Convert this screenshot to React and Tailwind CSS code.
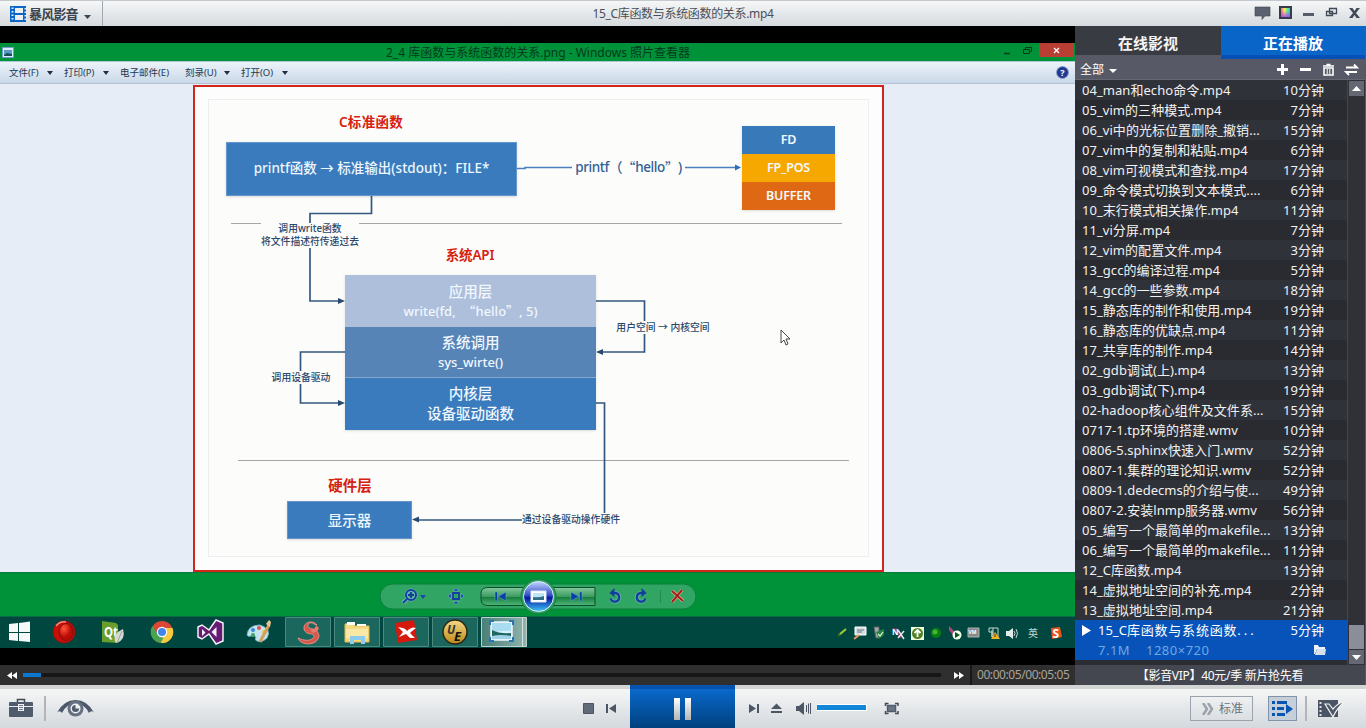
import React from 'react';

const episodes = [
  ['04_man和echo命令.mp4', '10分钟'],
  ['05_vim的三种模式.mp4', '7分钟'],
  ['06_vi中的光标位置删除_撤销...', '15分钟'],
  ['07_vim中的复制和粘贴.mp4', '6分钟'],
  ['08_vim可视模式和查找.mp4', '17分钟'],
  ['09_命令模式切换到文本模式....', '6分钟'],
  ['10_末行模式相关操作.mp4', '11分钟'],
  ['11_vi分屏.mp4', '7分钟'],
  ['12_vim的配置文件.mp4', '3分钟'],
  ['13_gcc的编译过程.mp4', '5分钟'],
  ['14_gcc的一些参数.mp4', '18分钟'],
  ['15_静态库的制作和使用.mp4', '19分钟'],
  ['16_静态库的优缺点.mp4', '11分钟'],
  ['17_共享库的制作.mp4', '14分钟'],
  ['02_gdb调试(上).mp4', '13分钟'],
  ['03_gdb调试(下).mp4', '19分钟'],
  ['02-hadoop核心组件及文件系...', '15分钟'],
  ['0717-1.tp环境的搭建.wmv', '10分钟'],
  ['0806-5.sphinx快速入门.wmv', '52分钟'],
  ['0807-1.集群的理论知识.wmv', '52分钟'],
  ['0809-1.dedecms的介绍与使...', '49分钟'],
  ['0807-2.安装lnmp服务器.wmv', '56分钟'],
  ['05_编写一个最简单的makefile...', '13分钟'],
  ['06_编写一个最简单的makefile...', '11分钟'],
  ['12_C库函数.mp4', '13分钟'],
  ['14_虚拟地址空间的补充.mp4', '2分钟'],
  ['13_虚拟地址空间.mp4', '21分钟'],
];

function TopBar() {
  return (
    <header className="flex h-[26px] items-stretch border-t border-[#c3c9ce] bg-linear-to-b from-[#f6f7f7] to-[#d5dade]">
      <div className="flex w-[103px] items-center border-r border-[#a2a8b0] pl-[10px] pt-px">
        <svg className="h-4 w-4 shrink-0" viewBox="0 0 16 16">
          <path d="M0 0h16v16H0z" fill="#0b66c8" />
          <path d="M5 2h8v5H5zM5 9h8v5H5z" fill="#eceef0" />
          <path d="M1.500 1.500h2v1.500h-2zM1.500 5h2v1.500h-2zM1.500 8.500h2V10h-2zM1.500 12h2v1.500h-2zM14.500 2H16v1.500h-1.500zM14.500 5.500H16V7h-1.500zM14.500 9H16v1.500h-1.500zM14.500 12.500H16V14h-1.500z" fill="#eceef0" />
        </svg>
        <span className="ml-[3px] w-[50px] whitespace-nowrap text-[13px] font-bold leading-none tracking-[-0.800px] text-[#3d434d]">暴风影音</span>
        <svg className="ml-[5px] mt-[6px] h-1 w-[7px]" viewBox="0 0 7 4"><path d="M0 0h7L3.500 4z" fill="#3b4450" /></svg>
      </div>
      <div className="flex flex-1 items-center justify-center">
        <span className="whitespace-nowrap pl-[9px] text-[12px] leading-none tracking-[-0.320px] text-[#4a4f57]">15_C库函数与系统函数的关系.mp4</span>
      </div>
      <div className="flex w-[112px] items-start pt-[5px]">
        <svg className="h-[18px] w-[112px]" viewBox="1254 6 112 18">
          <path d="M1255 7h15v9h-5l-3 3.500v-3.500h-7z" fill="#5a6270" stroke="#3f4651" strokeWidth=".6" />
          <defs>
            <linearGradient id="hue"><stop stopColor="#ff5f9a" /><stop offset=".4" stopColor="#fff04a" /><stop offset=".7" stopColor="#52f0a0" /><stop offset="1" stopColor="#30c8d8" /></linearGradient>
            <linearGradient id="hue2" x1="0" y1="0" x2="0" y2="1"><stop offset=".3" stopColor="#a4f" stopOpacity="0" /><stop offset="1" stopColor="#a4f" stopOpacity=".9" /></linearGradient>
          </defs>
          <path d="M1279 6h13v13h-13z" fill="#353c47" />
          <path d="M1281 8h9v9h-9z" fill="url(#hue)" /><path d="M1281 8h9v9h-9z" fill="url(#hue2)" />
          <path d="M1303 13h11v3h-11z" fill="#555d69" />
          <path d="M1329.500 8.500h7v5h-7zM1326.500 11.500h6v4h-6z" fill="#e6e9eb" stroke="#414a56" strokeWidth="1.300" />
          <path d="M1349 8h3.500l2 3 2-3h3.500l-4 5 4 5h-3.500l-2-3-2 3h-3.500l4-5z" fill="#414a56" />
        </svg>
      </div>
    </header>
  );
}

function Caret() {
  return <svg className="h-1 w-[6px]" viewBox="0 0 6 4"><path d="M0 0h6L3 4z" fill="#222e40" /></svg>;
}

function ViewerChrome() {
  return (
    <>
      <div className="flex h-[18px] items-center bg-[#009239]">
        <svg className="ml-[2px] h-[11px] w-[12px]" viewBox="0 0 12 11">
          <path d="M.5.500h11v10H.5z" fill="#dcecff" stroke="#7299d0" /><path d="M2 3h8v5H2z" fill="#5a9bc4" /><path d="M2 8l3-2 5 1v2H2z" fill="#174d54" />
        </svg>
        <span className="ml-[372px] whitespace-nowrap pt-[2px] text-[12px] leading-none text-[#033b1c]">2_4 库函数与系统函数的关系.png - Windows 照片查看器</span>
        <svg className="ml-auto h-[18px] w-[85px]" viewBox="990 43 85 18">
          <path d="M1004 53.500h6" stroke="#033b1c" strokeWidth="1.500" />
          <path d="M1023.500 49.500h6v4h-6zM1025.500 49.500v-2h6v4h-2" fill="none" stroke="#033b1c" />
          <path d="M1039 43h35v14h-35z" fill="#b93f35" />
          <path d="M1054 48l5 5m0-5l-5 5" stroke="#fff" strokeWidth="1.300" />
        </svg>
      </div>
      <div className="flex h-[23px] items-center whitespace-nowrap border-b border-[#b5c2d5] border-t border-t-[#a8c8d4] bg-linear-to-b from-[#ecf3fa] to-[#c9d9e8] pl-[9px] text-[9.500px] leading-none text-[#243750]">
        <span className="w-[38px]">文件(F)</span><Caret />
        <span className="ml-[11px] w-[39px]">打印(P)</span><Caret />
        <span className="ml-[11px] w-[65px]">电子邮件(E)</span>
        <span className="w-[39px]">刻录(U)</span><Caret />
        <span className="ml-[11px] w-[41px]">打开(O)</span><Caret />
        <svg className="ml-auto mr-[6px] h-[13px] w-[13px]" viewBox="0 0 13 13">
          <circle cx="6.500" cy="6.500" r="6" fill="#213a91" stroke="#8fa1cc" />
          <text x="6.500" y="10" fontSize="9" fontWeight="bold" fill="#fff" textAnchor="middle">?</text>
        </svg>
      </div>
    </>
  );
}

function Quoted({ children }) {
  return (
    <>
      <span className="font-['Noto_Sans_CJK_SC',sans-serif]">“</span>{children}<span className="font-['Noto_Sans_CJK_SC',sans-serif]">”</span>
    </>
  );
}

function Diagram() {
  return (
    <div className="relative h-[488px] overflow-hidden bg-[#e6edf6] font-medium">
      <div className="absolute left-[193px] top-px h-[487px] w-[691px] border-2 border-[#d0261b] bg-[#fdfdfd]" />
      <div className="absolute left-[208px] top-[15px] h-[458px] w-[661px] border border-[#eeeeee] bg-[#fcfcfb]" />
      <svg className="absolute inset-0 h-[488px] w-[1075px]" viewBox="0 84 1075 488" fill="none">
        <path d="M231 223.500h611M238 460.500h611" stroke="#a5a6a8" />
        <path d="M517 168.500h8v-1h210" stroke="#4a80bd" strokeWidth="1.600" />
        <path d="M741 167.500l-6-3v6z" fill="#2d6eb8" />
        <g stroke="#33587f" strokeWidth="1.700">
          <path d="M371.500 195v18.500h-61.500v87.500h29" />
          <path d="M595 301h49.500v51H602" />
          <path d="M346 352h-45.500v51h38" />
          <path d="M595 403h9.500v117H418" />
        </g>
        <path d="M345 301l-7-3v6zM596 352l7-3v6zM345 403l-7-3v6zM412 519.500l7-3v6z" fill="#27496f" />
      </svg>
      <div className="absolute left-[321px] top-[30px] w-[100px] text-center text-[13.500px] font-semibold leading-[17px] tracking-[0.300px] text-[#d6210f]">C标准函数</div>
      <div className="absolute left-[226px] top-[58px] flex h-[54px] w-[291px] items-center justify-center whitespace-nowrap border border-[#6397cd] bg-[#397bbc] text-[13.500px] leading-none text-[#eef6ff] shadow-sm">printf函数 → 标准输出(stdout)：FILE*</div>
      <div className="absolute left-[572px] top-[75px] flex h-[18px] w-[113px] items-center justify-center whitespace-nowrap bg-[#fcfcfb] text-[13.500px] leading-none tracking-[-0.400px] text-[#315f95]">printf（<Quoted>hello</Quoted>)</div>
      <div className="absolute left-[742px] top-[42px] h-[84px] w-[93px] text-center text-[12.500px] font-semibold leading-[28px] tracking-[-0.200px] text-[#f3f8ff] shadow-sm">
        <div className="h-[28px] bg-[#3879ba]">FD</div>
        <div className="h-[28px] bg-[#f6a800]">FP_POS</div>
        <div className="h-[28px] bg-[#de6813]">BUFFER</div>
      </div>
      <div className="absolute left-[261px] top-[139px] w-[98px] whitespace-nowrap bg-[#fcfcfb] text-center text-[9.800px] leading-[12.500px] text-[#29486c]">调用write函数<br />将文件描述符传递过去</div>
      <div className="absolute left-[420px] top-[162px] w-[100px] text-center text-[13.500px] font-semibold leading-[18px] tracking-[-0.200px] text-[#d6210f]">系统API</div>
      <div className="absolute left-[345px] top-[191px] w-[251px] text-center text-[14.500px] leading-[20px] text-[#f1f7ff] shadow-sm">
        <div className="h-[52px] bg-[#adbfdb] pt-[6px]">应用层<div className="h-[20px] whitespace-nowrap text-[13px]">write(fd,&nbsp; <Quoted>hello</Quoted>, 5)</div></div>
        <div className="h-[51px] border-b border-[#86a8cd] bg-[#5784b6] pt-[5px]">系统调用<div className="text-[13px]">sys_wirte()</div></div>
        <div className="h-[52px] bg-[#397bbc] pt-[5px]">内核层<div>设备驱动函数</div></div>
      </div>
      <div className="absolute left-[616px] top-[237px] w-[94px] whitespace-nowrap bg-[#fcfcfb] text-center text-[9.800px] leading-[13px] text-[#29486c]">用户空间 → 内核空间</div>
      <div className="absolute left-[271px] top-[287px] w-[60px] whitespace-nowrap bg-[#fcfcfb] text-center text-[9.800px] leading-[13px] text-[#29486c]">调用设备驱动</div>
      <div className="absolute left-[300px] top-[392px] w-[100px] text-center text-[14.500px] font-semibold leading-[18px] text-[#d6210f]">硬件层</div>
      <div className="absolute left-[287px] top-[417px] flex h-[38px] w-[125px] items-center justify-center border border-[#6397cd] bg-[#397bbc] text-[14.500px] leading-none text-[#eef6ff] shadow-sm">显示器</div>
      <div className="absolute left-[522px] top-[429px] w-[98px] whitespace-nowrap bg-[#fcfcfb] text-center text-[9.800px] leading-[13px] text-[#29486c]">通过设备驱动操作硬件</div>
      <svg className="absolute left-[780px] top-[245px] h-[17px] w-[11px]" viewBox="0 0 11 17"><path d="M1 1v13l3-3 2 5 2-1-2-5h4z" fill="#fff" stroke="#333" strokeWidth=".9" /></svg>
    </div>
  );
}

function ViewerControls() {
  return (
    <div className="h-[44px] bg-[#009239]">
      <svg className="h-[44px] w-[1075px]" viewBox="0 572 1075 44">
        <defs>
          <linearGradient id="glass" x1="0" y1="0" x2="0" y2="1"><stop stopColor="#83c99c" /><stop offset=".5" stopColor="#3e9c61" /><stop offset=".52" stopColor="#147b3d" /><stop offset="1" stopColor="#4fb778" /></linearGradient>
          <linearGradient id="orb" x1="0" y1="0" x2="0" y2="1"><stop stopColor="#c2d3ff" /><stop offset=".45" stopColor="#3552c7" /><stop offset=".55" stopColor="#0517a0" /><stop offset="1" stopColor="#3fc8f3" /></linearGradient>
        </defs>
        <path d="M0 572.500h1075" stroke="#087a37" />
        <rect x="380" y="584" width="316" height="25" rx="12.500" fill="#31a563" stroke="#087f3a" />
        <path d="M488 587.500h107v18H488q-7 0-7-6v-6q0-6 7-6z" fill="url(#glass)" stroke="#0c4f2b" />
        <circle cx="538.500" cy="596.500" r="17.500" fill="#2fa260" stroke="#167b42" />
        <circle cx="538.500" cy="596.500" r="15" fill="url(#orb)" stroke="#dfeaff" strokeWidth="1" />
        <path d="M531 591h15v11h-15z" fill="#fff" stroke="#dce8f5" /><path d="M533 593h11v7h-11z" fill="#bde3f7" /><path d="M533 600v-3q6 1 11-1v4z" fill="#2f6d87" />
        <g stroke="#8fc4e9" strokeWidth="4" strokeLinecap="round" fill="none" opacity=".6"><circle cx="411" cy="595" r="4.500" /><path d="M407 599l-3 3" /></g>
        <g stroke="#123f9c" strokeWidth="2" fill="none"><circle cx="411" cy="595" r="5" /><path d="M407 599l-4 4M408 595h6M411 592v6" strokeWidth="1.800" /></g>
        <path d="M420 595h6l-3 4z" fill="#174da5" />
        <g fill="#143f9e" stroke="#8cc6eb" strokeWidth=".5"><path d="M453 591h6l-3-3zM453 601.500h6l-3 3zM451 593v6l-3-3zM461 593v6l3-3z" /><path d="M453 593h6v6h-6z" fill="none" stroke="#143f9e" strokeWidth="1.800" /></g>
        <path d="M495 592h2.500v9H495zM506 592v9l-8-4.500zM579.500 592h2.500v9h-2.500zM571 592v9l8-4.500z" fill="#0b3fa5" stroke="#6eb2dc" strokeWidth=".5" />
        <g stroke="#8fc4e9" strokeWidth="4" fill="none" opacity=".5"><path d="M613 593h2a4.300 4.300 0 1 1-4 6" /><path d="M643 593h-2a4.300 4.300 0 1 0 4 6" /></g>
        <g stroke="#133f9b" strokeWidth="2.300" fill="none"><path d="M613 593h2a4.300 4.300 0 1 1-4.300 5.500" /><path d="M643 593h-2a4.300 4.300 0 1 0 4.300 5.500" /></g>
        <path d="M609.500 593l5-5v9zM646.500 593l-5-5v9z" fill="#133f9b" />
        <path d="M660.500 590v13" stroke="#238b4e" />
        <path d="M672 591l11 10M682 590l-10 12" stroke="#efb2a0" strokeWidth="3.200" /><path d="M672 591l11 10M682 590l-10 12" stroke="#a32116" strokeWidth="2" />
      </svg>
    </div>
  );
}

function Taskbar() {
  return (
    <div className="h-8 bg-[#00483f]">
      <svg className="h-8 w-[1075px]" viewBox="0 616 1075 32">
        <defs>
          <linearGradient id="active"><stop stopColor="#487f76" /><stop offset="1" stopColor="#91b4ae" /></linearGradient>
          <radialGradient id="ruby" cx=".35" cy=".3"><stop stopColor="#ff563b" /><stop offset="1" stopColor="#b80b05" /></radialGradient>
          <linearGradient id="gold" x1="0" y1="0" x2="0" y2="1"><stop stopColor="#f5d887" /><stop offset="1" stopColor="#bc8a17" /></linearGradient>
        </defs>
        <path d="M0 616.500h1075" stroke="#086a45" />
        <g fill="#1b665d" stroke="#4c887f"><path d="M285.500 617.500h45v29h-45zM334.500 617.500h45v29h-45zM383.500 617.500h45v29h-45zM432.500 617.500h45v29h-45z" /></g>
        <path d="M481.500 617.500h45v29h-45z" fill="url(#active)" stroke="#bcd0cc" /><path d="M522.500 617v30" stroke="#d7e2df" />
        <path d="M9 624l9-1v9H9zM19 623l11-1.500V632H19zM9 633h9v8l-9-1zM19 633h11v9l-11-1z" fill="#f5faf9" />
        <circle cx="64" cy="632" r="11" fill="#c60f06" stroke="#8e1010" /><ellipse cx="66" cy="632" rx="7" ry="8.500" fill="url(#ruby)" stroke="#8b0a06" /><path d="M56 626q4-5 10-4" fill="none" stroke="#f58d7c" strokeWidth="1.500" />
        <path d="M102 621l14 2 2 2v18l-16-1z" fill="#6a9e2c" /><text x="104" y="637" fontSize="14" fontWeight="bold" fill="#fff" textLength="14" lengthAdjust="spacingAndGlyphs">Qt</text><path d="M123 629q-11 5-8 13l2 1q9-4 6-14z" fill="#d4d9d2" /><path d="M122 631l-5 12" stroke="#8f988d" strokeWidth=".8" />
        <circle cx="162" cy="632" r="11" fill="#dc4737" /><path d="M162 628h10.500a11 11 0 0 1-11.500 15z" fill="#f7ca42" /><path d="M152.500 626l6 9 5 3-3 5A11 11 0 0 1 152.500 626z" fill="#48a451" /><circle cx="162" cy="632" r="5.200" fill="#fff" /><circle cx="162" cy="632" r="4" fill="#4384ef" />
        <path d="M198 627l4-2 7 5 7-10 7 3v18l-7 3-7-10-7 5-4-2z" fill="#651d71" stroke="#f6eef8" strokeWidth="1.500" /><path d="M202 629v7l3.500-3.500zM216.500 627v10l-5-5z" fill="#f6eef8" />
        <path d="M247 635q1-10 13-10 12 4 7 13-5 5-10 3-3-1-1-4-2-2-5-1-3 1-4-1z" fill="#c6e4ef" stroke="#78b2c4" />
        <circle cx="253" cy="630" r="2" fill="#368be0" /><circle cx="259" cy="628" r="2" fill="#dd5148" /><circle cx="264" cy="632" r="2" fill="#f3c532" /><circle cx="253" cy="635" r="2" fill="#3ba760" />
        <path d="M269 625l-9 17" stroke="#d3a056" strokeWidth="3" /><path d="M266 624l3-4 2 2-1 5z" fill="#e5c690" />
        <path d="M317 625q-3-4-8-3-6 2-5 7 1 5 8 5 4 2 0 5-5 3-14-1 2 6 11 6 9-1 10-8 0-5-6-7-6-1-5-4 2-4 6-1z" fill="#d5594d" stroke="#f2a293" strokeWidth=".7" /><path d="M310 630q6-1 6-5l3 3q-1 4-6 5z" fill="#e5796c" />
        <path d="M345 624l7-1 3 3h14v16h-24z" fill="#f7d981" stroke="#dfba58" /><path d="M347 622h8v3h-8zM357 624h9v2h-9z" fill="#fff" /><path d="M346 629h22v9h-22z" fill="#fae9a5" /><path d="M350 636h15v8h-4v-4h-7v4h-4z" fill="#8ccbee" />
        <path d="M395 623l19-3 3 20-19 3z" fill="#d6180d" /><path d="M398 627q8 1 9 4 5-5 9-3-4 3-6 5l5 5h-5l-4-4-7 3 4-5z" fill="#fff" />
        <circle cx="455" cy="632" r="12" fill="url(#gold)" stroke="#2b2615" strokeWidth="1.500" />
        <text x="447" y="634" fontSize="12" fontWeight="bold" fontStyle="italic" fill="#3b3830">U</text><text x="454" y="641" fontSize="13" fontWeight="bold" fontStyle="italic" fill="#111">E</text>
        <path d="M491 622h21v18h-21z" fill="#d8f2ff" stroke="#e9f5fb" strokeWidth="1.500" /><path d="M492 623h19v8q-9-1-19 2z" fill="#a9dbf1" /><path d="M492 630q8 4 19 3v5h-19z" fill="#22675f" /><path d="M492 636q9-2 19 0v3h-19z" fill="#9fd2e8" /><path d="M490 625v-4h4M509 621h4v4M490 637v4h4M509 641h4v-4" fill="none" stroke="#2676b7" strokeWidth="2" />
        <path d="M839 635l7-6" stroke="#9fca30" strokeWidth="2.200" /><path d="M838 636l2-2" stroke="#316e22" strokeWidth="2" />
        <path d="M855 627h11v8h-11z" fill="#d7e0df" stroke="#fff" /><path d="M857 630h7m-7 2h5" stroke="#5b7587" /><path d="M854 639l5-4" stroke="#dc9a5f" strokeWidth="2" />
        <path d="M874 627h5v11h-3z" fill="#a0a8aa" stroke="#5c6266" /><path d="M876 632l8-3v6l-5 4z" fill="#278344" /><path d="M878 634l2 2 3-4" fill="none" stroke="#d6f2d6" strokeWidth="1.200" />
        <path d="M892 628h5l7 10h-5z" fill="#6d3a62" /><text x="892" y="635" fontSize="8" fontWeight="bold" fill="#fff">N</text><path d="M898 630l6 9m0-8l-6 7" stroke="#e7e7ed" strokeWidth="1.500" />
        <path d="M911 627h13v13h-13z" fill="#efffdc" /><circle cx="917.500" cy="633.500" r="5.500" fill="#528127" /><path d="M917.500 637v-7m-3 3l3-3 3 3" fill="none" stroke="#fff" strokeWidth="1.800" />
        <circle cx="936" cy="633" r="5" fill="#087f13" /><circle cx="935" cy="632" r="2.500" fill="#48b431" />
        <path d="M949 626l6 6-2 3-4-5z" fill="#b4477f" /><circle cx="957" cy="635" r="4.500" fill="#f1ffed" /><path d="M955 632v6l5-3z" fill="#10521a" />
        <path d="M968 628h11v9h-11z" fill="#868b8d" stroke="#a8b2b0" /><text x="968.500" y="634" fontSize="5" fontWeight="bold" fill="#fff">VM</text>
        <path d="M989 628h9v9h-6v-7M989 628v4h3v5M993 628v7" fill="none" stroke="#c6d5cf" /><path d="M995 632l5 7h-9z" fill="#f0b326" /><path d="M995 634v3" stroke="#43370b" />
        <path d="M1006 631h3l4-3v11l-4-3h-3z" fill="#e1ecea" /><path d="M1014 631q2 2 0 5m2-7q3 4 0 9" fill="none" stroke="#c4d6d2" />
        <text x="1028" y="637" fontSize="10" fill="#c4d7d2">英</text>
        <path d="M1051 628l9-1 2 10-10 2z" fill="#e9531d" /><text x="1052.500" y="637.500" fontSize="12" fontWeight="bold" fill="#fff">S</text>
      </svg>
    </div>
  );
}

function SeekBar() {
  return (
    <div className="flex h-5 items-center bg-[#2f2f2f]">
      <svg className="ml-[7px] h-[7px] w-[10px]" viewBox="0 0 10 7"><path d="M5 0v7L0 3.500zM10 0v7L5 3.500z" fill="#fff" /></svg>
      <div className="ml-[6px] h-1 w-[918px] bg-[#171717]"><div className="h-1 w-[18px] bg-[#0b78d0]" /></div>
      <svg className="ml-[13px] h-[7px] w-[10px]" viewBox="0 0 10 7"><path d="M0 0v7l5-3.500zM5 0v7l5-3.500z" fill="#fff" /></svg>
      <div className="ml-[6px] flex h-5 flex-1 items-center border-l-2 border-[#181818] pl-[5px] text-[12px] leading-none text-[#aaa49b]">
        <span className="whitespace-nowrap tracking-[-0.430px]">00:00:05/00:05:05</span>
      </div>
    </div>
  );
}

function Playlist() {
  return (
    <aside className="flex h-[659px] w-[291px] flex-col border-r border-[#565963] bg-[#2c2d33] text-white">
      <div className="flex h-[33px] bg-[#575a66] text-[15px] font-bold leading-[34px]">
        <div className="h-[29px] w-[146px] bg-[#393b43] text-center text-[#f4f4f4]">在线影视</div>
        <div className="h-[33px] flex-1 border-b-4 border-[#0750b5] bg-[#0966c8] text-center">正在播放</div>
      </div>
      <div className="flex h-[21px] items-center border-b border-[#656873] bg-[#575a66] pl-[5px]">
        <span className="pt-[2px] text-[12px] leading-none">全部</span>
        <svg className="ml-[5px] mt-[4px] h-1 w-2" viewBox="0 0 8 4"><path d="M0 0h8L4 4z" fill="#fff" /></svg>
        <svg className="ml-auto h-[15px] w-[90px]" viewBox="1275 62 90 15">
          <path d="M1277 69.500h11M1282.500 64v11" stroke="#fff" strokeWidth="3" />
          <path d="M1300 69.500h11" stroke="#fff" strokeWidth="3" />
          <path d="M1323 66h11M1326.500 64.500h4" fill="none" stroke="#fff" strokeWidth="1.600" /><path d="M1324 68h9v7h-9z" fill="none" stroke="#fff" strokeWidth="1.600" /><path d="M1327.200 69v5M1329.800 69v5" stroke="#fff" />
          <path d="M1346 67.500h11l-3-3M1357 72h-11l3 3" fill="none" stroke="#fff" strokeWidth="1.800" />
        </svg>
      </div>
      <div className="flex h-[585px]">
        <div className="w-[272px]">
          {episodes.map(([name, length]) => (
            <div key={name} className="flex h-5 items-center justify-between whitespace-nowrap pl-[7px] pr-[23px] text-[13px] leading-5 tracking-[0.050px] text-[#f1f1f1] odd:bg-[#30323a] even:bg-[#2a2b30]">
              <span>{name}</span><span>{length}</span>
            </div>
          ))}
          <div className="h-10 bg-[#0753b9] pl-[7px] pr-[23px]">
            <div className="flex h-5 items-center whitespace-nowrap text-[13px] leading-5">
              <svg className="h-[11px] w-[9px]" viewBox="0 0 9 11"><path d="M0 0l9 5.500L0 11z" fill="#fff" /></svg>
              <span className="ml-[7px] flex-1">15_C<span className="tracking-[0.800px]">库函数与系统函数</span><span className="tracking-[3px]">...</span></span><span>5分钟</span>
            </div>
            <div className="flex h-5 items-center text-[13px] leading-5 tracking-[0.500px] text-[#6fa8e3]">
              <span className="ml-4 w-12">7.1M</span><span>1280×720</span>
              <svg className="ml-auto mr-[-2px] h-[10px] w-[12px]" viewBox="0 0 12 10"><path d="M0 0h4l1 2h6v2H3L1 9H0z" fill="#edf2fa" /><path d="M3 4h9l-1 6H1z" fill="#d7dfe9" /></svg>
            </div>
          </div>
        </div>
        <div className="flex flex-1 flex-col items-center border-l border-[#45474e] bg-[#303137] py-px">
          <div className="flex h-[15px] w-[15px] items-center justify-center bg-[#656873]"><svg className="h-[5px] w-[9px]" viewBox="0 0 9 5"><path d="M0 5h9L4.500 0z" fill="#fff" /></svg></div>
          <div className="mt-auto h-[24px] w-[15px] bg-[#8b8e98]" />
          <div className="mt-px flex h-[14px] w-[15px] items-center justify-center bg-[#656873]"><svg className="h-[5px] w-[9px]" viewBox="0 0 9 5"><path d="M0 0h9L4.500 5z" fill="#fff" /></svg></div>
        </div>
      </div>
      <div className="flex h-5 items-center justify-center whitespace-nowrap bg-[#444750] pt-px text-[12px] leading-none tracking-[-0.300px]">【影音VIP】40元/季 新片抢先看</div>
    </aside>
  );
}

function PlayerControls() {
  return (
    <footer className="flex h-[43px] items-stretch border-t-4 border-[#d3d4d4] bg-linear-to-b from-[#f6f6f6] to-[#d3d9de]">
      <svg className="h-[39px] w-[630px]" viewBox="0 689 630 39">
        <path d="M17.500 702v-2.500h7v2.500" fill="none" stroke="#404958" strokeWidth="1.500" />
        <rect x="9" y="702" width="24" height="15" rx="1" fill="#505b6c" />
        <path d="M9 706.500h24" stroke="#e6e9ec" /><path d="M18 704h6v7h-6z" fill="#f1f3f4" /><path d="M19 705.500h4m-4 2h4m-4 2h4" stroke="#505b6c" strokeWidth=".8" />
        <path d="M45 696v25" stroke="#b2b5b8" strokeWidth="2" />
        <path d="M57 712.500q7-12.500 18.500-12.500T94 712.500q-3-2.500-5 .5-4-9-13.500-9T62 713q-2-3-5-.500z" fill="#4d586a" />
        <circle cx="75.500" cy="708.500" r="8" fill="#667083" /><circle cx="75.500" cy="708.500" r="5" fill="#f0f2f3" /><circle cx="75.500" cy="708.500" r="3.600" fill="#505b6d" /><path d="M75.500 708.500v-4a4 4 0 0 1 4 4z" fill="#eff1f3" />
        <path d="M583.500 703.500h10v10h-10z" fill="#606a79" stroke="#4c5563" />
        <path d="M606 704h2v9h-2zM616 704v9l-7-4.500z" fill="#4d5665" />
      </svg>
      <button className="-mt-1 flex h-[43px] w-[105px] items-center justify-center gap-[5px] border-t-4 border-[#0752ae] bg-linear-to-b from-[#0b69cc] to-[#00417f]">
        <span className="h-[22px] w-[6px] bg-linear-to-b from-white to-[#b5b5b5]" /><span className="h-[22px] w-[6px] bg-linear-to-b from-white to-[#b5b5b5]" />
      </button>
      <svg className="h-[39px] w-[455px]" viewBox="735 689 455 39">
        <path d="M749 704v9l7-4.500zM757 704h2v9h-2zM771 709h11l-5.500-5.500zM771 711h11v2h-11z" fill="#4d5665" />
        <path d="M796 706h3l5-4v13l-5-4h-3z" fill="#4d5665" /><path d="M806.500 705v7M808.500 703.500v10M810.500 703v11" stroke="#4d5665" />
        <path d="M817 704h50v7h-50z" fill="#fff" /><path d="M817 705h49v5h-49z" fill="#1287d8" />
        <path d="M887.500 705.500h8v6h-8z" fill="#697485" stroke="#525d6c" strokeWidth="1.500" /><path d="M885.500 706v-2.500h3M895 703.500h3v2.500M885.500 711v2.500h3M895 713.500h3V711" fill="none" stroke="#414a58" strokeWidth="1.500" />
      </svg>
      <div className="mt-[7px] flex h-[25px] w-[63px] items-center border border-[#9aa3ae] pl-[11px]">
        <svg className="h-3 w-[12px]" viewBox="0 0 12 12"><path d="M1 0l4 6-4 6M6 0l4 6-4 6" fill="none" stroke="#9ba2ac" strokeWidth="2.500" /></svg>
        <span className="ml-[5px] pt-px text-[12px] leading-none text-[#6b7280]">标准</span>
      </div>
      <div className="ml-[15px] mt-[7px] flex h-[25px] w-[29px] items-center justify-center border border-[#8293aa] bg-[#c5cfda]">
        <svg className="h-[17px] w-[21px]" viewBox="0 0 21 17"><path d="M0 1h3v3H0zM5 1h10v3H5zM0 7h3v3H0zM5 7h7v3H5zM0 13h3v3H0zM5 13h8v3H5zM14 4l7 5-7 5z" fill="#0756b4" /></svg>
      </div>
      <svg className="h-[39px] flex-1" viewBox="1297 689 69 39">
        <path d="M1306 696v25" stroke="#b2b5b8" strokeWidth="2" />
        <path d="M1318 700h20v17h-20z" fill="#4a5464" /><path d="M1319.500 702h2v2h-2zM1319.500 706h2v2h-2zM1319.500 710h2v2h-2zM1319.500 714h2v2h-2z" fill="#dce0e4" />
        <path d="M1325 704h4l4 5q5-6 12-8-8 7-12 16z" fill="#4f5969" stroke="#f2f3f4" strokeWidth="1.200" />
      </svg>
    </footer>
  );
}

export default function App() {
  return (
    <div className="flex h-[728px] w-[1366px] flex-col overflow-hidden bg-black font-['Noto_Sans','Noto_Sans_CJK_SC',sans-serif]">
      <TopBar />
      <div className="flex h-[659px]">
        <main className="flex w-[1075px] flex-col pt-[17px]">
          <ViewerChrome />
          <Diagram />
          <ViewerControls />
          <Taskbar />
          <div className="mt-auto"><SeekBar /></div>
        </main>
        <Playlist />
      </div>
      <PlayerControls />
    </div>
  );
}
